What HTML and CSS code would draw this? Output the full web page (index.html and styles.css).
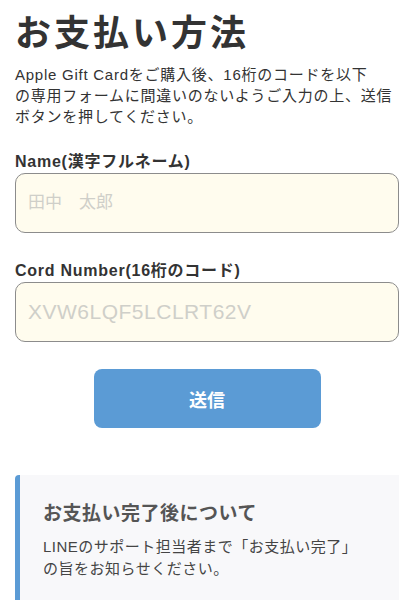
FILE: index.html
```html
<!DOCTYPE html>
<html lang="ja">
<head>
<meta charset="utf-8">
<meta name="viewport" content="width=device-width, initial-scale=1">
<title>お支払い方法</title>
<link rel="stylesheet" href="styles.css">
</head>
<body>
<main class="page">
  <h1 class="title">お支払い方法</h1>
  <p class="lead">Apple Gift Cardをご購入後、16桁のコードを以下<br>の専用フォームに間違いのないようご入力の上、送信<br>ボタンを押してください。</p>
  <form class="form">
    <label class="field">
      <span class="label">Name(漢字フルネーム)</span>
      <input class="input input-name" type="text" placeholder="田中　太郎">
    </label>
    <label class="field">
      <span class="label">Cord Number(16桁のコード)</span>
      <input class="input input-code" type="text" placeholder="XVW6LQF5LCLRT62V">
    </label>
    <div class="actions">
      <button class="submit" type="button">送信</button>
    </div>
  </form>
  <section class="note">
    <h2 class="note-title">お支払い完了後について</h2>
    <p class="note-text">LINEのサポート担当者まで「お支払い完了」<br>の旨をお知らせください。</p>
  </section>
</main>
</body>
</html>
```

FILE: styles.css
```css
html, body {
  margin: 0;
  padding: 0;
  background: #ffffff;
}
body {
  font-family: "Liberation Sans", "Noto Sans CJK JP", sans-serif;
  color: #333333;
}
.page {
  padding: 12px 15px 40px;
}
.title {
  margin: 0;
  font-size: 36px;
  line-height: 43px;
  font-weight: 700;
  letter-spacing: 3px;
  color: #333333;
}
.lead {
  margin: 9px 0 0;
  font-size: 15px;
  line-height: 21px;
  letter-spacing: 0.75px;
  white-space: nowrap;
  color: #333333;
}
.form {
  margin-top: 24px;
  display: flex;
  flex-direction: column;
  gap: 27px;
}
.field {
  display: flex;
  flex-direction: column;
  gap: 1px;
}
.label {
  font-size: 16px;
  line-height: 21px;
  font-weight: 700;
  letter-spacing: 0.75px;
  color: #333333;
}
.input {
  box-sizing: border-box;
  width: 100%;
  height: 60px;
  margin: 0;
  padding: 0 12px;
  border: 1px solid #8c8c8c;
  border-radius: 10px;
  background: #fffcee;
  font-family: "Liberation Sans", "Noto Sans CJK JP", sans-serif;
  color: #333333;
  outline: none;
}
.input-name {
  font-size: 17px;
}
.input-code {
  font-size: 21px;
  letter-spacing: 0.5px;
}
.input::placeholder {
  color: #cfcfc9;
}
.actions {
  display: flex;
  justify-content: center;
}
.submit {
  width: 227px;
  height: 59px;
  border: none;
  border-radius: 8px;
  background: #5b9bd5;
  color: #ffffff;
  font-family: "Liberation Sans", "Noto Sans CJK JP", sans-serif;
  font-size: 18px;
  font-weight: 700;
  cursor: pointer;
}
.note {
  margin-top: 47px;
  padding: 25px 20px 24px 23px;
  background: #f8f8fa;
  border-left: 5px solid #5b9bd5;
  border-radius: 4px 0 0 0;
}
.note-title {
  margin: 0;
  font-size: 19px;
  line-height: 27px;
  font-weight: 700;
  letter-spacing: 0.5px;
  color: #555555;
}
.note-text {
  margin: 9px 0 0;
  font-size: 15px;
  line-height: 22px;
  letter-spacing: 0.5px;
  color: #444444;
}
```
